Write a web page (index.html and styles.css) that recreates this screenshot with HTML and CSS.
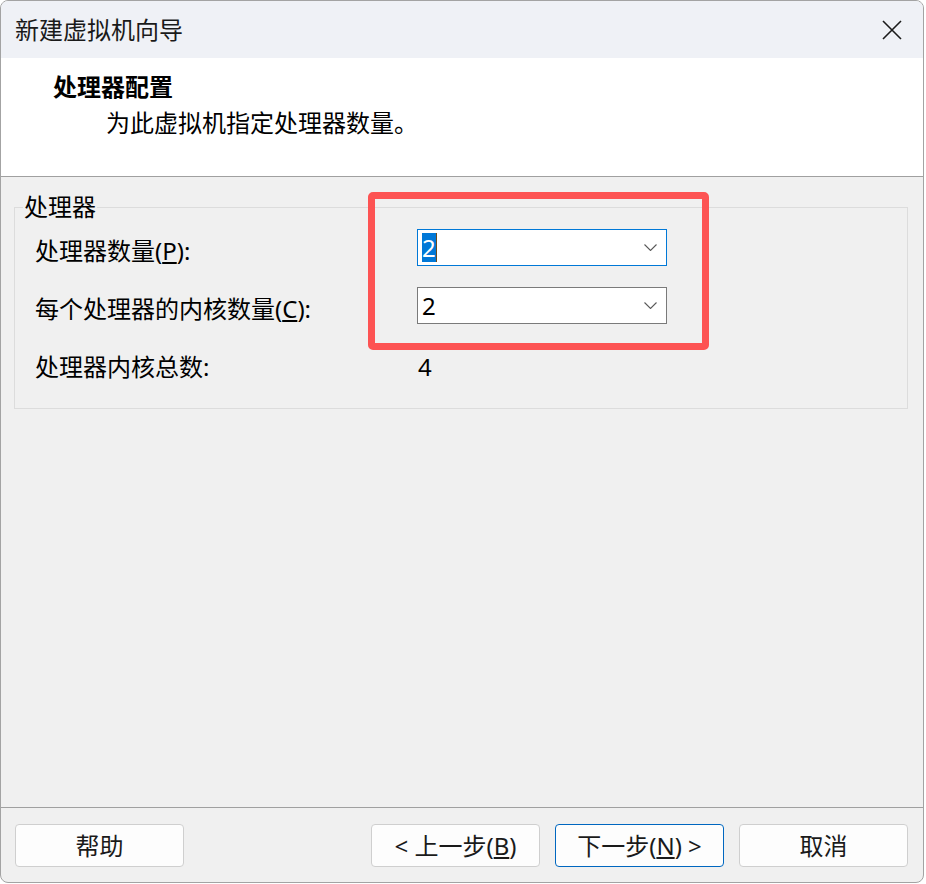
FILE: index.html
```html
<!DOCTYPE html>
<html lang="zh-CN">
<head>
<meta charset="utf-8">
<title>新建虚拟机向导</title>
<link rel="stylesheet" href="styles.css">
</head>
<body>
<div class="window">
  <div class="titlebar">
    <span class="title">新建虚拟机向导</span>
    <svg class="close" width="20" height="20" viewBox="0 0 20 20"><path d="M1 1 L19 19 M19 1 L1 19" stroke="#1b1b1b" stroke-width="1.6" fill="none"/></svg>
  </div>
  <div class="header">
    <div class="h-title">处理器配置</div>
    <div class="h-sub">为此虚拟机指定处理器数量。</div>
  </div>
  <div class="content">
    <div class="group">
      <span class="legend">处理器</span>
      <div class="grid">
        <div class="label">处理器数量(<u>P</u>):</div>
        <div class="combo focused">
          <span class="value"><span class="sel">2</span><span class="caret"></span></span>
          <svg class="chev" width="13" height="7" viewBox="0 0 13 7"><path d="M0.5 0.5 L6.5 6.5 L12.5 0.5" stroke="#5a5a5a" stroke-width="1.1" fill="none"/></svg>
        </div>
        <div class="label">每个处理器的内核数量(<u>C</u>):</div>
        <div class="combo">
          <span class="value">2</span>
          <svg class="chev" width="13" height="7" viewBox="0 0 13 7"><path d="M0.5 0.5 L6.5 6.5 L12.5 0.5" stroke="#5a5a5a" stroke-width="1.1" fill="none"/></svg>
        </div>
        <div class="label">处理器内核总数:</div>
        <div class="label total">4</div>
      </div>
    </div>
  </div>
  <div class="footer">
    <button class="btn">帮助</button>
    <div class="nav">
      <button class="btn">&lt; 上一步(<u>B</u>)</button>
      <button class="btn primary">下一步(<u>N</u>) &gt;</button>
      <button class="btn">取消</button>
    </div>
  </div>
  <div class="highlight-box"></div>
</div>
</body>
</html>
```
FILE: styles.css
```css
* { box-sizing: border-box; }
html, body { margin: 0; padding: 0; background: #ffffff; }
body {
  font-family: "Noto Sans", "Noto Sans CJK SC", sans-serif;
  font-size: 24px;
  color: #000;
}
.window {
  position: relative;
  width: 924px;
  height: 883px;
  border: 1px solid #a3a3a3;
  border-radius: 8px;
  overflow: hidden;
  background: #f0f0f0;
  display: flex;
  flex-direction: column;
}
.titlebar {
  height: 57px;
  flex: none;
  background: #eff1f6;
  display: flex;
  align-items: center;
  justify-content: space-between;
  padding: 0 21px 0 14px;
}
.title { line-height: 32px; color: #1a1a1a; }
.close { display: block; }
.header {
  flex: none;
  height: 119px;
  background: #ffffff;
  border-bottom: 1px solid #a0a0a0;
  padding: 11px 0 0 52px;
}
.h-title { font-weight: 700; line-height: 36px; }
.h-sub { line-height: 36px; padding-left: 53px; }
.content {
  flex: 1;
  padding: 30px 15px 0 13px;
}
.group {
  position: relative;
  border: 1px solid #dcdcdc;
  padding: 21px 20px 26px 20px;
}
.legend {
  position: absolute;
  top: -13px;
  left: 8px;
  padding: 0 1px;
  line-height: 24px;
  background: #f0f0f0;
}
.grid {
  display: grid;
  grid-template-columns: 382px 250px;
  grid-auto-rows: 37px;
  row-gap: 21px;
}
.label {
  padding-top: 7px;
  line-height: 29px;
  white-space: nowrap;
}
.total { padding-left: 1px; }
.combo {
  background: #ffffff;
  border: 1px solid #7a7a7a;
  display: flex;
  align-items: center;
  justify-content: space-between;
  padding: 0 9px 0 4px;
}
.combo.focused { border-color: #0078d7; }
.value { line-height: 29px; display: flex; align-items: center; }
.sel { background: #0078d7; color: #fff; }
.caret { width: 1px; height: 29px; background: #6b4a1e; }
.chev { display: block; }
.footer {
  flex: none;
  height: 75px;
  border-top: 1px solid #a0a0a0;
  padding: 16px 15px 15px 14px;
  display: flex;
  justify-content: space-between;
}
.nav { display: flex; gap: 15px; }
.btn {
  width: 169px;
  height: 43px;
  font: inherit;
  font-size: 24px;
  line-height: 30px;
  color: #1a1a1a;
  background: #fdfdfd;
  border: 1px solid #cfcfcf;
  border-radius: 4px;
  padding: 0;
}
.btn.primary { border-color: #0067c0; }
.highlight-box {
  position: absolute;
  left: 367px;
  top: 191px;
  width: 341px;
  height: 158px;
  border: 7px solid #fd5353;
  border-radius: 5px;
  pointer-events: none;
}
```
